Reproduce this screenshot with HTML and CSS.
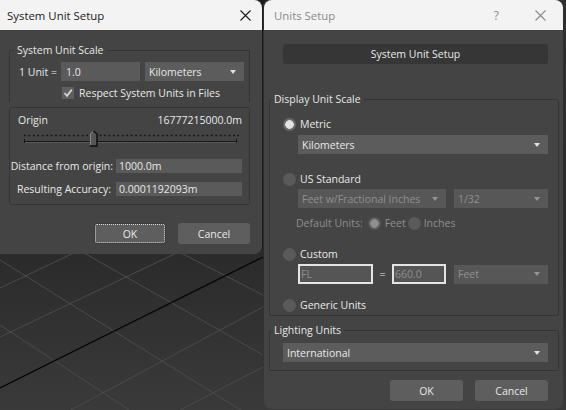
FILE: index.html
```html
<!DOCTYPE html>
<html>
<head>
<meta charset="utf-8">
<link rel="stylesheet" href="styles.css">
</head>
<body>
<div class="desktop">
  <svg class="viewport" width="566" height="410" viewBox="0 0 566 410">
    <g stroke="#4b4b4b" stroke-width="1" fill="none">
      <line x1="0" y1="260" x2="263" y2="424"/>
      <line x1="70" y1="245" x2="263" y2="355"/>
      <line x1="175" y1="250" x2="263" y2="295"/>
      <line x1="0" y1="325" x2="140" y2="417"/>
      <line x1="0" y1="288" x2="80" y2="250"/>
      <line x1="0" y1="337" x2="185" y2="249"/>
      <line x1="71" y1="410" x2="263" y2="307"/>
      <line x1="180" y1="410" x2="263" y2="367"/>
    </g>
    <line x1="0" y1="388" x2="263" y2="257" stroke="#050505" stroke-width="1.3"/>
    <line x1="262.5" y1="0" x2="262.5" y2="250" stroke="#1c1c1c" stroke-width="1"/>
    <polygon points="259,0 266,0 262.5,5" fill="#1c1c1c"/>
  </svg>

  <section class="dlg dlg-sys">
    <header class="titlebar">
      <span class="title">System Unit Setup</span>
      <svg class="close" width="11" height="11" viewBox="0 0 11 11"><path d="M0.5 0.5 L10.5 10.5 M10.5 0.5 L0.5 10.5" stroke="#1a1a1a" stroke-width="1.1" fill="none"/></svg>
    </header>
    <div class="sys-body">
      <fieldset class="group g-scale">
        <legend>System Unit Scale</legend>
        <div class="unit-row">
          <span class="unit-lbl">1 Unit =</span>
          <span class="field f-unit">1.0</span>
          <span class="dropdown dd-km">Kilometers<svg class="tri" width="6" height="4" viewBox="0 0 6 4"><polygon points="0,0 6,0 3,4" fill="#e0e0e0"/></svg></span>
        </div>
        <div class="check-row">
          <span class="checkbox"><svg width="12" height="12" viewBox="0 0 12 12"><path d="M2.5 6 L5 8.8 L9.8 2.6" stroke="#d4d4d4" stroke-width="1.8" fill="none"/></svg></span>
          <span>Respect System Units in Files</span>
        </div>
      </fieldset>
      <fieldset class="group g-origin">
        <div class="origin-row"><span>Origin</span><span>16777215000.0m</span></div>
        <svg class="slider" width="216" height="18" viewBox="0 0 216 18">
          <line x1="1" y1="6.5" x2="216" y2="6.5" stroke="#121212" stroke-width="1.6" stroke-dasharray="1.7 2.75"/>
          <line x1="1" y1="12.5" x2="214" y2="12.5" stroke="#161616" stroke-width="1"/>
          <line x1="1" y1="13.5" x2="214" y2="13.5" stroke="#5a5a5a" stroke-width="1"/>
          <line x1="1.5" y1="10" x2="1.5" y2="14" stroke="#161616" stroke-width="1"/>
          <line x1="213.5" y1="10" x2="213.5" y2="14" stroke="#161616" stroke-width="1"/>
          <polygon points="67,5 70.5,1.5 74,5 74,17 67,17" fill="#565656"/>
          <polyline points="67.5,16.5 67.5,5 70.5,2" stroke="#8a8a8a" stroke-width="1" fill="none"/>
          <polyline points="70.5,2 74,5 74,17 67,17" stroke="#0e0e0e" stroke-width="1.5" fill="none"/>
        </svg>
        <div class="info-row info-dist"><span>Distance from origin:</span><span class="field f-info">1000.0m</span></div>
        <div class="info-row info-acc"><span>Resulting Accuracy:</span><span class="field f-info">0.0001192093m</span></div>
      </fieldset>
      <div class="btn-row sys-btns">
        <span class="btn btn-focus">OK</span>
        <span class="btn">Cancel</span>
      </div>
    </div>
  </section>

  <section class="dlg dlg-units">
    <header class="titlebar inactive">
      <span class="title">Units Setup</span>
      <span class="help">?</span>
      <svg class="close" width="11" height="11" viewBox="0 0 11 11"><path d="M0.5 0.5 L10.5 10.5 M10.5 0.5 L0.5 10.5" stroke="#8a8a8a" stroke-width="1.1" fill="none"/></svg>
    </header>
    <div class="units-body">
      <span class="sys-btn">System Unit Setup</span>
      <fieldset class="group g-display">
        <legend>Display Unit Scale</legend>
        <div class="radio-row r-metric"><span class="radio on"></span><span>Metric</span></div>
        <span class="dropdown dd-wide">Kilometers<svg class="tri" width="6" height="4" viewBox="0 0 6 4"><polygon points="0,0 6,0 3,4" fill="#e0e0e0"/></svg></span>
        <div class="radio-row r-us"><span class="radio"></span><span>US Standard</span></div>
        <div class="sub-row frac-row">
          <span class="dropdown dis dd-frac">Feet w/Fractional Inches<svg class="tri" width="6" height="4" viewBox="0 0 6 4"><polygon points="0,0 6,0 3,4" fill="#959595"/></svg></span>
          <span class="dropdown dis dd-small">1/32<svg class="tri" width="6" height="4" viewBox="0 0 6 4"><polygon points="0,0 6,0 3,4" fill="#959595"/></svg></span>
        </div>
        <div class="default-row">
          <span class="def-lbl">Default Units:</span>
          <span class="radio dis-on"></span><span class="opt-feet">Feet</span>
          <span class="radio dis-off"></span><span class="opt-in">Inches</span>
        </div>
        <div class="radio-row r-custom"><span class="radio"></span><span>Custom</span></div>
        <div class="sub-row custom-row">
          <span class="field boxed f-fl">FL</span>
          <span class="eq">=</span>
          <span class="field boxed f-660">660.0</span>
          <span class="dropdown dis dd-small">Feet<svg class="tri" width="6" height="4" viewBox="0 0 6 4"><polygon points="0,0 6,0 3,4" fill="#959595"/></svg></span>
        </div>
        <div class="radio-row r-generic"><span class="radio"></span><span>Generic Units</span></div>
      </fieldset>
      <fieldset class="group g-light">
        <legend>Lighting Units</legend>
        <span class="dropdown dd-light">International<svg class="tri" width="6" height="4" viewBox="0 0 6 4"><polygon points="0,0 6,0 3,4" fill="#e0e0e0"/></svg></span>
      </fieldset>
      <div class="btn-row units-btns">
        <span class="btn btn-wide">OK</span>
        <span class="btn btn-wide">Cancel</span>
      </div>
    </div>
  </section>
</div>
</body>
</html>
```

FILE: styles.css
```css
* { box-sizing: border-box; }
html, body { margin: 0; padding: 0; }
body {
  width: 566px;
  height: 410px;
  overflow: hidden;
  font-family: "Open Sans", "Noto Sans", sans-serif;
  font-size: 10.5px;
  color: #e8e8e8;
}
.desktop {
  position: relative;
  width: 566px;
  height: 410px;
  background: linear-gradient(to bottom, #2f2f2f 0, #2b2b2b 255px, #3a3a3a 410px);
  overflow: hidden;
}
.viewport { position: absolute; left: 0; top: 0; }

.dlg {
  position: absolute;
  top: 0;
  background: #444444;
  overflow: hidden;
  display: flex;
  flex-direction: column;
}
.dlg-sys { left: 0; width: 262px; height: 254px; border-radius: 0 8px 8px 0; }
.dlg-units { left: 264px; width: 299px; height: 409px; border-radius: 8px; }

.titlebar {
  height: 30px;
  flex: none;
  background: #f3f3f3;
  display: flex;
  align-items: center;
  color: #1a1a1a;
  font-size: 11.4px;
}
.dlg-sys .titlebar { padding: 0 11px 0 7px; }
.dlg-sys .titlebar .close { margin-left: auto; }
.dlg-units .titlebar { padding: 0 17px 0 10px; color: #8a8a8a; }
.help { margin-left: auto; font-size: 12px; margin-right: 36px; color: #8a8a8a; }

.group {
  margin: 0;
  border: 1px solid #353535;
  border-radius: 2px;
  min-width: 0;
}
.group legend {
  padding: 0 3px;
  line-height: 16px;
  height: 16px;
}

/* ---------- left dialog ---------- */
.sys-body { padding: 0 12px 0 9px; display: flex; flex-direction: column; }
.g-scale { margin-top: 12px; padding: 4px 5px 2px 9px; border-bottom: none; border-bottom-left-radius: 0; border-bottom-right-radius: 0; }
.g-scale legend { margin-left: -5px; }
.unit-row { display: flex; align-items: center; height: 19px; }
.unit-lbl { width: 42px; flex: none; }
.field {
  background: #5a5a5a;
  display: flex;
  align-items: center;
  flex: none;
  white-space: nowrap;
}
.f-unit { width: 79px; height: 19px; padding-left: 5px; }
.dropdown {
  background: #5c5c5c;
  display: flex;
  align-items: center;
  flex: none;
  height: 19px;
  padding: 0 8px 0 4px;
  white-space: nowrap;
}
.dropdown .tri { margin-left: auto; flex: none; }
.dropdown.dis { background: #575757; color: #8f8f8f; }
.dd-km { width: 99px; margin-left: 5px; }
.check-row { display: flex; align-items: center; height: 14px; margin-top: 5px; }
.checkbox { width: 12px; height: 12px; background: #5f5f5f; margin-left: 43px; margin-right: 5px; display: flex; }

.g-origin { margin-top: 5px; padding: 4px 7px 8px 8px; }
.origin-row { display: flex; justify-content: space-between; height: 16px; align-items: center; }
.slider { display: block; margin: 1px 0 0 5px; }
.info-row { display: flex; justify-content: flex-end; align-items: center; height: 14px; gap: 3px; white-space: nowrap; }
.info-dist { margin-top: 12px; }
.info-acc { margin-top: 9px; }
.info-acc > span:first-child { margin-right: 2px; }
.f-info { width: 126px; height: 14px; padding-left: 3px; }

.btn-row { display: flex; justify-content: flex-end; gap: 12px; }
.sys-btns { margin-top: 18px; }
.btn {
  width: 72px;
  height: 21px;
  background: #5e5e5e;
  border-radius: 3px;
  display: flex;
  align-items: center;
  justify-content: center;
}
.btn-focus { outline: 1px dotted #d8d8d8; outline-offset: -2px; border: 1px solid #3a3a3a; }

/* ---------- right dialog ---------- */
.units-body { padding: 0 4px 0 5px; display: flex; flex-direction: column; }
.sys-btn {
  margin: 14px 11px 0 14px;
  height: 20px;
  background: #363636;
  border-radius: 3px;
  display: flex;
  align-items: center;
  justify-content: center;
}
.g-display { margin-top: 27px; padding: 10px 10px 3px 13px; display: flex; flex-direction: column; align-items: flex-start; }
.g-display legend, .g-light legend { margin-left: -12px; }
.radio-row { display: flex; align-items: center; height: 14px; gap: 4px; }
.radio {
  width: 13px;
  height: 13px;
  border-radius: 50%;
  background: #5a5a5a;
  flex: none;
}
.radio.on { background: radial-gradient(circle, #e2e2e2 0 4px, #686868 4.6px); }
.radio.dis-on { background: radial-gradient(circle, #8e8e8e 0 4px, #5a5a5a 4.6px); }
.dd-wide { width: 250px; margin: 4px 0 0 15px; }
.r-us { margin-top: 18px; }
.sub-row { display: flex; align-items: center; margin-left: 15px; gap: 8px; }
.frac-row { margin-top: 3px; }
.dd-frac { width: 148px; }
.dd-small { width: 94px; }
.default-row { display: flex; align-items: center; height: 14px; margin: 8px 0 0 13px; color: #8f8f8f; }
.def-lbl { margin-right: 5px; }
.opt-feet { margin-left: 4px; margin-right: 2px; }
.opt-in { margin-left: 3px; }
.r-custom { margin-top: 17px; }
.custom-row { margin-top: 3px; gap: 0; height: 20px; }
.boxed { height: 20px; border: 2px solid #e4e4e4; background: #555555; color: #8f8f8f; padding-left: 1px; }
.f-fl { width: 75px; }
.eq { width: 19px; text-align: center; }
.f-660 { width: 54px; }
.custom-row .dd-small { margin-left: 8px; }
.r-generic { margin-top: 14px; }

.g-light { margin-top: 6px; padding: 5px 10px 8px 13px; }
.dd-light { width: 265px; }

.units-btns { margin-top: 9px; padding-right: 11px; }
.btn-wide { width: 73px; }
```
